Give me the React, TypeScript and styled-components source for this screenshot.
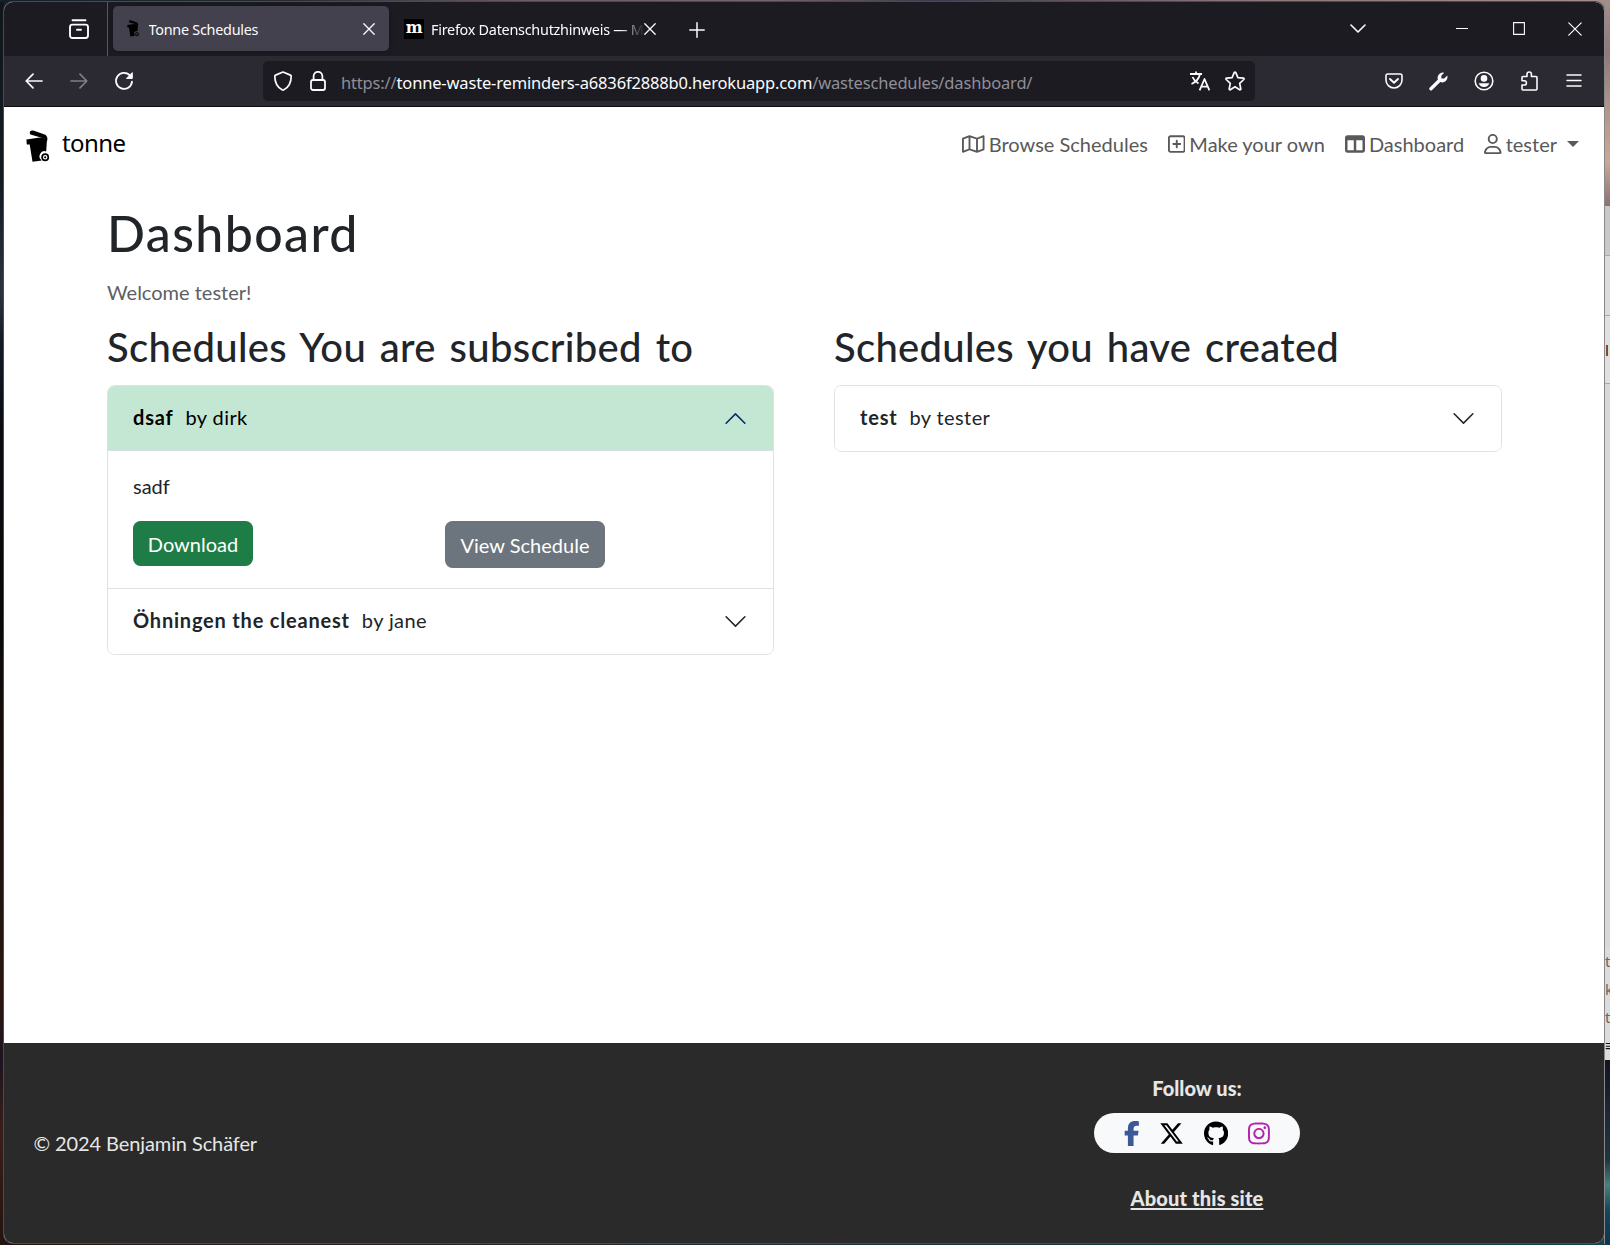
import React from "react";
import styled, { createGlobalStyle } from "styled-components";
import {
  FaRegMap,
  FaRegSquarePlus,
  FaTableColumns,
  FaRegUser,
  FaFacebookF,
  FaXTwitter,
  FaGithub,
  FaInstagram,
} from "react-icons/fa6";

const UI_FONT = `"Noto Sans", "Open Sans", sans-serif`;
const SITE_FONT = `Lato, "Open Sans", sans-serif`;

const GlobalStyle = createGlobalStyle`
  * { box-sizing: border-box; }
  body { margin: 0; background: #0b0f16; overflow: hidden; }
  h1, h2, p { margin: 0; }
  button { font: inherit; border: 0; background: none; padding: 0; color: inherit; }
  svg { display: block; flex: none; }
`;

/* ---------- desktop ---------- */

const Desktop = styled.div`
  display: grid;
  grid-template-columns: 4px 1600px 6px;
  width: 1610px;
  height: 1245px;
  padding: 2px 0 1px;
  overflow: hidden;
  background: linear-gradient(90deg, #12202a 0%, #252a35 18%, #6d5d66 33%, #77636c 48%, #3b3a4b 58%, #8a7379 76%, #a58d88 100%) top / 100% 60px no-repeat,
    linear-gradient(90deg, #24130f, #2a2224 25%, #123039 60%, #12454e 100%);
`;

const WallpaperEdge = styled.div`
  background: linear-gradient(#10171c 0, #141a22 180px, #2c3340 290px, #141a26 340px, #0a0c12 420px, #090808 620px, #1d110d 800px, #2a1610 1000px, #1d1420 1060px, #3a1f17 1130px, #24130f 1243px);
`;

const BackWindows = styled.div`
  display: flex;
  flex-direction: column;
  overflow: hidden;
  border-left: 1px solid #8b8889;
`;

const Slice = styled.div<{ $h: number; $bg: string; $line?: boolean; $top?: number }>`
  height: ${(p) => p.$h}px;
  flex: none;
  padding-top: ${(p) => p.$top ?? 0}px;
  background: ${(p) => p.$bg};
  border-bottom: ${(p) => (p.$line ? "1px solid #a9a9a9" : "0")};
  font: 15px ${UI_FONT};
  line-height: 28px;
  white-space: nowrap;
`;

const Peek = styled.div<{ $strong?: boolean }>`
  height: 28px;
  color: ${(p) => (p.$strong ? "#111" : "#666")};
`;

const BrowserWindow = styled.div`
  display: grid;
  grid-template-rows: 54px 51px 936px 200px;
  height: 1241px;
  border-radius: 9px;
  overflow: hidden;
  box-shadow: 0 0 0 1px #4a4a50;
  background: #fff;
`;

/* ---------- browser chrome ---------- */

const TabStrip = styled.div`
  display: flex;
  align-items: center;
  background: #1c1b22;
  color: #fbfbfe;
  font: 14.4px ${UI_FONT};
  letter-spacing: -0.26px;
`;

const TabManager = styled.button`
  display: flex;
  justify-content: flex-end;
  align-items: center;
  width: 104px;
  height: 54px;
  padding-right: 18px;
  border-right: 1px solid #57565e;
`;

const Tab = styled.div<{ $active?: boolean }>`
  display: flex;
  align-items: center;
  flex: none;
  width: ${(p) => (p.$active ? 276 : 277)}px;
  height: 45px;
  margin-left: ${(p) => (p.$active ? 5 : 4)}px;
  margin-bottom: 1px;
  padding: 0 14px 0 ${(p) => (p.$active ? 14 : 11)}px;
  border-radius: 5px;
  background: ${(p) => (p.$active ? "#42414d" : "transparent")};
  box-shadow: ${(p) => (p.$active ? "0 0 4px rgba(0,0,0,.35)" : "none")};
`;

const TabTitle = styled.span<{ $fade?: boolean }>`
  flex: 1;
  min-width: 0;
  margin-left: ${(p) => (p.$fade ? 7 : 9)}px;
  padding-top: 2px;
  overflow: hidden;
  white-space: nowrap;
  mask-image: ${(p) => (p.$fade ? "linear-gradient(90deg, #000 calc(100% - 24px), transparent)" : "none")};
`;

const MozillaMark = styled.span`
  display: flex;
  align-items: center;
  justify-content: center;
  width: 20px;
  height: 20px;
  padding-bottom: 3px;
  background: #000;
  color: #fff;
  font: bold 16px "DejaVu Serif", serif;
`;

const NewTab = styled.button`
  display: flex;
  margin-left: 19px;
  padding-top: 1px;
`;

const WindowControls = styled.div`
  display: flex;
  align-items: center;
  margin-left: auto;
  padding-right: 22px;
  padding-bottom: 1px;
`;

const ControlSlot = styled.button<{ $w: number }>`
  display: flex;
  justify-content: flex-end;
  width: ${(p) => p.$w}px;
`;

const Toolbar = styled.div`
  display: flex;
  align-items: center;
  padding: 0 8px 0 7px;
  background: #2b2a33;
  border-bottom: 1px solid #0c0c0d;
  color: #fbfbfe;
`;

const ToolButton = styled.button<{ $dim?: boolean }>`
  display: flex;
  align-items: center;
  justify-content: center;
  width: 45px;
  height: 40px;
  opacity: ${(p) => (p.$dim ? 0.4 : 1)};
`;

const UrlBar = styled.div`
  display: flex;
  align-items: center;
  width: 992px;
  height: 40px;
  margin: 0 auto 0 117px;
  padding: 0 10px;
  border-radius: 5px;
  background: #1c1b22;
`;

const UrlText = styled.span`
  flex: 1;
  margin-left: 15px;
  padding-top: 3px;
  font: 16.5px ${UI_FONT};
  letter-spacing: -0.165px;
  color: #8f8f98;
  white-space: nowrap;
`;

const Host = styled.span`
  color: #fbfbfe;
`;

const IconGap = styled.span<{ $w: number }>`
  width: ${(p) => p.$w}px;
`;

/* ---------- page ---------- */

const Page = styled.div`
  background: #fff;
  font: 20px/30px ${SITE_FONT};
  color: #212529;
`;

const Navbar = styled.nav`
  display: flex;
  align-items: center;
  justify-content: space-between;
  height: 74px;
  padding: 0 15px 0 22px;
`;

const Brand = styled.a`
  display: flex;
  align-items: center;
  gap: 12px;
  padding-top: 3px;
  color: #000;
  font: 24px/30px ${UI_FONT};
  letter-spacing: -0.6px;
`;

const BrandName = styled.span`
  padding-bottom: 5px;
`;

const NavLinks = styled.div`
  display: flex;
`;

const NavLink = styled.a`
  display: flex;
  align-items: center;
  gap: 4px;
  padding: 0 10px;
  color: #595959;
`;

const Glyph = styled.span<{ $w: number; $h: number }>`
  display: flex;

  svg {
    width: ${(p) => p.$w}px;
    height: ${(p) => p.$h}px;
  }
`;

const Caret = styled.span`
  margin-left: 6px;
  margin-bottom: 1px;
  border: 6px solid transparent;
  border-top-color: currentColor;
  border-bottom: 0;
`;

const Content = styled.main`
  display: grid;
  grid-template-columns: 667px 668px;
  column-gap: 60px;
  padding: 22px 0 0 103px;
`;

const Intro = styled.div`
  grid-column: 1 / -1;
  height: 119.5px;
`;

const PageTitle = styled.h1`
  font-size: 50px;
  line-height: 60px;
  font-weight: 500;
  letter-spacing: 1.4px;
`;

const Welcome = styled.p`
  margin-top: 14px;
  color: #5c6064;
`;

const SectionTitle = styled.h2`
  height: 62.5px;
  font-size: 40px;
  line-height: 48px;
  font-weight: 500;
  letter-spacing: 0.3px;
  word-spacing: 3.4px;
  white-space: nowrap;
`;

const Accordion = styled.div`
  border: 1px solid #dee2e6;
  border-radius: 7.5px;
  overflow: hidden;
`;

const Item = styled.section`
  & + & {
    border-top: 1px solid #dee2e6;
  }
`;

const ItemHeader = styled.button<{ $open?: boolean }>`
  display: flex;
  align-items: center;
  width: 100%;
  height: 65px;
  padding: 0 25px;
  text-align: left;
  background: ${(p) => (p.$open ? "#c4e7d4" : "#fff")};
  color: ${(p) => (p.$open ? "#000" : "#212529")};
  border-bottom: ${(p) => (p.$open ? "1px solid #d5dfe0" : "0")};
`;

const ItemName = styled.strong`
  margin-bottom: 3px;
  letter-spacing: 0.8px;
`;

const ItemAuthor = styled.span`
  margin: 0 auto 3px 12px;
  letter-spacing: 0.4px;
`;

const ItemBody = styled.div`
  padding: 20px 25px;
`;

const Actions = styled.div`
  display: grid;
  grid-template-columns: 312px 1fr;
  align-items: start;
  justify-items: start;
  margin-top: 20px;
`;

const ActionButton = styled.button<{ $secondary?: boolean }>`
  width: ${(p) => (p.$secondary ? 160 : 120)}px;
  height: ${(p) => (p.$secondary ? 47 : 45)}px;
  border-radius: 7.5px;
  background: ${(p) => (p.$secondary ? "#6c757d" : "#1e7d46")};
  color: #fff;
  white-space: nowrap;
`;

/* ---------- footer ---------- */

const Footer = styled.footer`
  display: grid;
  grid-template-columns: 763px 800px;
  align-items: center;
  padding-left: 30px;
  background: #2a2a2a;
  color: #e6e6e6;
  font: 20px/30px ${SITE_FONT};
`;

const Copyright = styled.p`
  margin-left: -0.5px;
  letter-spacing: -0.1px;
`;

const Social = styled.div`
  display: flex;
  flex-direction: column;
  align-items: center;
  font-weight: 900;
`;

const SocialPill = styled.div`
  display: flex;
  align-items: center;
  gap: 20px;
  height: 40px;
  margin: 10px 0 30px;
  padding: 0 30px;
  border-radius: 20px;
  background: #f8f9fa;
`;

const SocialLink = styled.a<{ $color?: string }>`
  display: flex;
  color: ${(p) => p.$color ?? "#000"};
`;

const AboutLink = styled.a`
  text-decoration: underline;
  text-decoration-thickness: 2px;
  text-underline-offset: 2px;
  text-decoration-skip-ink: none;
  letter-spacing: 0.15px;
`;

/* ---------- drawings ---------- */

type StrokeProps = { w: number; h?: number; sw?: number; children: React.ReactNode };

const Stroke = ({ w, h = w, sw = 1.7, children }: StrokeProps) => (
  <svg
    width={w}
    height={h}
    viewBox={`0 0 ${w} ${h}`}
    fill="none"
    stroke="currentColor"
    strokeWidth={sw}
    strokeLinecap="round"
    strokeLinejoin="round"
  >
    {children}
  </svg>
);

const Bin = ({ width, dark }: { width: number; dark?: boolean }) => (
  <svg width={width} height={(width * 32) / 24} viewBox="0 0 24 32">
    <path d="M3.800 3.400C3.400 1 5.200 0 7.200.6L18 4.200c2.600.9 3.600 2.600 3.400 5.200L20.800 12 19 8.800 4.500 4.600Z" fill="#000" />
    <path d="M.4 9.400 14 7.600l7 1.200-.8 12.700a5 5 0 0 0-4.400 8.900l-9.300 1.300L3.700 14.600H.8Z" fill="#000" />
    <circle cx="19.200" cy="27.300" r="3.100" fill={dark ? "#42414d" : "#fff"} stroke="#000" strokeWidth="1.700" />
    <circle cx="19.200" cy="27.300" r="1.100" fill="#000" />
  </svg>
);

const Close = ({ size, sw = 1.3 }: { size: number; sw?: number }) => (
  <Stroke w={size} sw={sw}>
    <path d={`M.8.8 ${size - 0.8} ${size - 0.8}M${size - 0.8}.8.8 ${size - 0.8}`} />
  </Stroke>
);

const Chevron = ({ up }: { up?: boolean }) => (
  <svg width="25" height="25" viewBox="0 0 16 16" fill={up ? "#052c65" : "#212529"}>
    <path
      fillRule="evenodd"
      transform={up ? "rotate(180 8 8)" : undefined}
      d="M1.646 4.646a.5.5 0 0 1 .708 0L8 10.293l5.646-5.647a.5.5 0 0 1 .708.708l-6 6a.5.5 0 0 1-.708 0l-6-6a.5.5 0 0 1 0-.708z"
    />
  </svg>
);

/* ---------- sections ---------- */

const Tabs = () => (
  <TabStrip>
    <TabManager>
      <Stroke w={20} sw={1.9}>
        <path d="M3.500 1.200h13" />
        <rect x="1" y="5.600" width="18" height="13.400" rx="2.400" />
        <path d="M8 10.800h4" />
      </Stroke>
    </TabManager>
    <Tab $active>
      <Bin width={12.5} dark />
      <TabTitle>Tonne Schedules</TabTitle>
      <Close size={12} />
    </Tab>
    <Tab>
      <MozillaMark>m</MozillaMark>
      <TabTitle $fade>Firefox Datenschutzhinweis — M</TabTitle>
      <Close size={12} />
    </Tab>
    <NewTab>
      <Stroke w={16} sw={1.5}>
        <path d="M8 .8v14.400M.8 8h14.400" />
      </Stroke>
    </NewTab>
    <WindowControls>
      <ControlSlot $w={16}>
        <Stroke w={16} h={9} sw={1.6}>
          <path d="M1 1l7 7 7-7" />
        </Stroke>
      </ControlSlot>
      <ControlSlot $w={102}>
        <Stroke w={12} h={2} sw={1}>
          <path d="M0 .5h12" />
        </Stroke>
      </ControlSlot>
      <ControlSlot $w={57}>
        <Stroke w={12} h={13} sw={1.1}>
          <path d="M.6.6h10.800v11.800H.6z" strokeLinejoin="miter" />
        </Stroke>
      </ControlSlot>
      <ControlSlot $w={57}>
        <Close size={14} sw={1.2} />
      </ControlSlot>
    </WindowControls>
  </TabStrip>
);

const NavigationBar = () => (
  <Toolbar>
    <ToolButton>
      <Stroke w={18} h={16}>
        <path d="M17 8H1.500M8 1.200 1.200 8 8 14.800" />
      </Stroke>
    </ToolButton>
    <ToolButton $dim>
      <Stroke w={18} h={16}>
        <path d="M1 8h15.500M10 1.200 16.800 8 10 14.800" />
      </Stroke>
    </ToolButton>
    <ToolButton>
      <Stroke w={20} sw={1.8}>
        <path d="M16.200 4.800A8 8 0 1 0 18 10.600" />
        <path d="M18.300 2v5.400h-5.500z" fill="currentColor" strokeWidth="1" />
      </Stroke>
    </ToolButton>
    <UrlBar>
      <Stroke w={20}>
        <path d="M10 1 17.400 4.100c.5.2.8.6.8 1.200 0 5.800-2.500 11-7.300 13.500a1.900 1.900 0 0 1-1.800 0C4.300 16.300 1.800 11.100 1.800 5.300c0-.6.3-1 .8-1.200Z" />
      </Stroke>
      <IconGap $w={17} />
      <Stroke w={16} h={20} sw={1.8}>
        <rect x="1" y="9" width="14" height="10" rx="2" />
        <path d="M3.600 9V5.200a4.400 4.400 0 0 1 8.800 0V9" />
      </Stroke>
      <UrlText>
        https://<Host>tonne-waste-reminders-a6836f2888b0.herokuapp.com</Host>/wasteschedules/dashboard/
      </UrlText>
      <Stroke w={20} sw={1.8}>
        <path d="M0 3h12M6 .5V3M10 3C9 7.500 6 11 1.500 13M2.500 6c1.200 3 3.600 5 6 6.500" strokeLinecap="butt" />
        <path d="M9.600 19.300 14.500 8l4.900 11.300M11.400 15.600h6.200" strokeLinecap="butt" />
      </Stroke>
      <IconGap $w={15} />
      <Stroke w={20} sw={1.7}>
        <path d="M9.300 1.400a.8.8 0 0 1 1.400 0l2.200 5.300 5.500.5c.7.1.9.8.4 1.300l-4.100 3.800 1.100 5.600c.1.700-.5 1.100-1.100.8L10 15.800l-4.700 2.900c-.6.3-1.200-.1-1.100-.8l1.100-5.600-4.100-3.800c-.5-.5-.3-1.200.4-1.300l5.500-.5Z" />
      </Stroke>
    </UrlBar>
    <ToolButton>
      <Stroke w={18} h={16} sw={1.6}>
        <path d="M2.800 1h12.400A1.800 1.800 0 0 1 17 2.800V7A8 8 0 0 1 1 7V2.800A1.800 1.800 0 0 1 2.800 1Z" />
        <path d="m5 6 4 3.800L13 6" strokeWidth="1.900" />
      </Stroke>
    </ToolButton>
    <ToolButton>
      <svg width="19" height="19" viewBox="0 0 19 19" fill="currentColor">
        <path d="M18.200 3.600 15.200 6.600 12.400 6.400 12.300 3.700 15.200.8A5.200 5.200 0 0 0 8.900 7.500L.8 15.600a1.600 1.600 0 1 0 2.400 2.400l8.100-8a5.200 5.200 0 0 0 6.900-6.400Z" />
      </svg>
    </ToolButton>
    <ToolButton>
      <Stroke w={20} sw={1.6}>
        <circle cx="10" cy="10" r="8.800" />
        <circle cx="10" cy="7.400" r="3.300" fill="currentColor" stroke="none" />
        <path d="M4.600 12.300h10.800A5.600 5.600 0 0 1 10 16a5.600 5.600 0 0 1-5.400-3.700Z" fill="currentColor" stroke="none" />
      </Stroke>
    </ToolButton>
    <ToolButton>
      <Stroke w={18} h={20} sw={1.6}>
        <path d="M7 5.500V3.200a2.200 2.200 0 0 1 4.400 0v2.300H16a1 1 0 0 1 1 1V18a1 1 0 0 1-1 1H3a1 1 0 0 1-1-1v-4h2.300a2.100 2.100 0 0 0 0-4.200H2V6.500a1 1 0 0 1 1-1Z" />
      </Stroke>
    </ToolButton>
    <ToolButton>
      <Stroke w={16} h={14} sw={1.5}>
        <path d="M1 1h14M1 6.500h14M1 12h14" />
      </Stroke>
    </ToolButton>
  </Toolbar>
);

type ScheduleProps = { name: string; author: string; description?: string };

const Schedule = ({ name, author, description }: ScheduleProps) => (
  <Item>
    <ItemHeader $open={!!description}>
      <ItemName>{name}</ItemName>
      <ItemAuthor>by {author}</ItemAuthor>
      <Chevron up={!!description} />
    </ItemHeader>
    {description && (
      <ItemBody>
        <p>{description}</p>
        <Actions>
          <ActionButton>Download</ActionButton>
          <ActionButton $secondary>View Schedule</ActionButton>
        </Actions>
      </ItemBody>
    )}
  </Item>
);

const NAV = [
  { label: "Browse Schedules", Icon: FaRegMap, width: 22.5 },
  { label: "Make your own", Icon: FaRegSquarePlus, width: 17.5 },
  { label: "Dashboard", Icon: FaTableColumns, width: 20 },
  { label: "tester", Icon: FaRegUser, width: 17.5, menu: true },
];

const SOCIAL = [
  { name: "facebook", Icon: FaFacebookF, width: 15.6, color: "#3b5998" },
  { name: "x", Icon: FaXTwitter, width: 25 },
  { name: "github", Icon: FaGithub, width: 24.2 },
  { name: "instagram", Icon: FaInstagram, width: 21.9, color: "#b324ad" },
];

export default function App() {
  return (
    <>
      <GlobalStyle />
      <Desktop>
        <WallpaperEdge />
        <BrowserWindow>
          <Tabs />
          <NavigationBar />
          <Page>
            <Navbar>
              <Brand>
                <Bin width={24} />
                <BrandName>tonne</BrandName>
              </Brand>
              <NavLinks>
                {NAV.map(({ label, Icon, width, menu }) => (
                  <NavLink key={label}>
                    <Glyph $w={width} $h={20}>
                      <Icon />
                    </Glyph>
                    {label}
                    {menu && <Caret />}
                  </NavLink>
                ))}
              </NavLinks>
            </Navbar>
            <Content>
              <Intro>
                <PageTitle>Dashboard</PageTitle>
                <Welcome>Welcome tester!</Welcome>
              </Intro>
              <div>
                <SectionTitle>Schedules You are subscribed to</SectionTitle>
                <Accordion>
                  <Schedule name="dsaf" author="dirk" description="sadf" />
                  <Schedule name="Öhningen the cleanest" author="jane" />
                </Accordion>
              </div>
              <div>
                <SectionTitle>Schedules you have created</SectionTitle>
                <Accordion>
                  <Schedule name="test" author="tester" />
                </Accordion>
              </div>
            </Content>
          </Page>
          <Footer>
            <Copyright>© 2024 Benjamin Schäfer</Copyright>
            <Social>
              <span>Follow us:</span>
              <SocialPill>
                {SOCIAL.map(({ name, Icon, width, color }) => (
                  <SocialLink key={name} $color={color}>
                    <Glyph $w={width} $h={25}>
                      <Icon />
                    </Glyph>
                  </SocialLink>
                ))}
              </SocialPill>
              <AboutLink>About this site</AboutLink>
            </Social>
          </Footer>
        </BrowserWindow>
        <BackWindows>
          <Slice $h={204} $bg="linear-gradient(#a58d88, #8f787b 50px, #b3978c 110px, #c9a898 160px, #8a7078 204px)" />
          <Slice $h={50} $bg="#c9c9c9" $line />
          <Slice $h={60} $bg="#dcdcdc" $line />
          <Slice $h={68} $bg="#e0e0e0" $line $top={20}>
            <Peek $strong>l</Peek>
          </Slice>
          <Slice $h={563} $bg="#d8d8d8" />
          <Slice $h={113} $bg="#dcdcdc">
            <Peek>t</Peek>
            <Peek>k</Peek>
            <Peek>to</Peek>
            <Peek $strong>≡</Peek>
          </Slice>
          <Slice $h={184} $bg="linear-gradient(#12141f, #1d2638 50px, #1f3540 100px, #4a807f 125px, #16465a 150px, #0e3550)" />
        </BackWindows>
      </Desktop>
    </>
  );
}
